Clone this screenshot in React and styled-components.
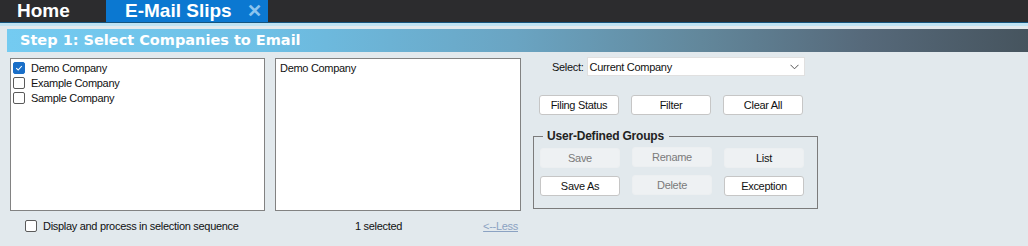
import React from 'react';
import styled, { createGlobalStyle } from 'styled-components';

const GlobalStyle = createGlobalStyle`
  html, body {
    margin: 0;
    padding: 0;
    background: #e2e9ed;
    font-family: "Liberation Sans", Arial, sans-serif;
    font-size: 11px;
    color: #111;
  }
`;

const TabBar = styled.div`
  height: 22px;
  background: #2c2c2e;
  display: flex;
  align-items: stretch;
`;

const Tab = styled.div`
  width: ${(p) => p.width}px;
  box-sizing: border-box;
  padding-left: ${(p) => p.pad}px;
  background: ${(p) => (p.active ? '#0b78d1' : 'transparent')};
  color: #fff;
  font-weight: bold;
  font-size: 19px;
  line-height: 22px;
  display: flex;
  align-items: center;
`;

const Close = styled.span`
  margin-left: 15px;
  color: #8cc4ef;
  font-size: 18px;
  font-weight: bold;
  line-height: 22px;
`;

const DarkLine = styled.div`
  height: 1px;
  background: #16557e;
`;

const LightBand = styled.div`
  height: 3px;
  background: #bfe3f3;
`;

const Page = styled.div`
  padding: 3px 0 0 7px;
`;

const StepHeader = styled.div`
  height: 23px;
  background: linear-gradient(to right, #74cbf1 0%, #6ec0e6 25%, #6aa4c2 50%, #62879b 68%, #56697a 84%, #46545e 100%);
  color: #fff;
  font-family: "DejaVu Sans", Verdana, sans-serif;
  font-weight: bold;
  font-size: 14.5px;
  line-height: 23px;
  padding-left: 13px;
`;

const Body = styled.div`
  display: flex;
  align-items: flex-start;
  margin-top: 6px;
  padding-left: 3px;
`;

const ListBox = styled.div`
  width: ${(p) => p.width}px;
  height: 153px;
  box-sizing: border-box;
  margin-left: ${(p) => p.offset || 0}px;
  background: #fff;
  border: 1px solid #828282;
  padding: 1px 2px;
`;

const Row = styled.div`
  height: 15px;
  display: flex;
  align-items: center;
  letter-spacing: -0.3px;
`;

const Box = styled.span`
  width: 12px;
  height: 12px;
  box-sizing: border-box;
  margin-right: 6px;
  border-radius: 2px;
  border: 1px solid ${(p) => (p.checked ? '#1a6fc8' : '#5a5a5a')};
  background: ${(p) => (p.checked ? '#1a6fc8' : '#fff')};
  display: flex;
  align-items: center;
  justify-content: center;
  flex-shrink: 0;
`;

const PlainRow = styled(Row)`
  padding-left: 2px;
  height: 16px;
`;

const Panel = styled.div`
  width: 285px;
  margin-left: 12px;
  margin-top: -1px;
`;

const SelectRow = styled.div`
  display: flex;
  align-items: center;
  padding-left: 19px;
  letter-spacing: -0.3px;
`;

const SelectBox = styled.div`
  width: 218px;
  height: 19px;
  box-sizing: border-box;
  margin-left: 3px;
  background: #fff;
  border: 1px solid #e0e0e0;
  display: flex;
  align-items: center;
  justify-content: space-between;
  padding: 0 5px 0 2px;
`;

const ButtonRow = styled.div`
  display: flex;
  gap: 12px;
  padding-left: ${(p) => p.pad || 0}px;
  margin-top: ${(p) => p.top || 0}px;
`;

const Button = styled.div`
  width: 80px;
  height: 20px;
  box-sizing: border-box;
  border-radius: 3px;
  border: 1px solid ${(p) => (p.disabled || p.soft ? '#eceff1' : '#c6c6c6')};
  background: ${(p) => (p.disabled || p.soft ? '#eef1f3' : '#fff')};
  color: ${(p) => (p.disabled ? '#7a7a7a' : '#111')};
  display: flex;
  align-items: center;
  justify-content: center;
  letter-spacing: -0.3px;
  margin-top: ${(p) => p.shift || 0}px;
`;

const Group = styled.fieldset`
  margin: 14px 0 0 0;
  width: 285px;
  height: 80px;
  box-sizing: border-box;
  border: 1px solid #7b7b7b;
  padding: 5px 0 0 6px;
`;

const Legend = styled.legend`
  font-weight: bold;
  font-size: 12px;
  letter-spacing: -0.2px;
  color: #222;
  margin-left: 3px;
  padding: 0 5px 0 4px;
`;

const Footer = styled.div`
  display: flex;
  align-items: center;
  margin-top: 8px;
  padding-left: 3px;
  height: 14px;
  letter-spacing: -0.3px;
`;

const FooterLeft = styled.div`
  width: 265px;
  display: flex;
  align-items: center;
  padding-left: 15px;
  box-sizing: border-box;
`;

const FooterMid = styled.div`
  width: 246px;
  display: flex;
  justify-content: space-between;
  padding: 0 13px 0 70px;
  box-sizing: border-box;
  margin-left: 10px;
`;

const LessLink = styled.span`
  color: #8ba2c2;
  text-decoration: underline;
`;

const Check = () => (
  <svg width="8" height="8" viewBox="0 0 8 8">
    <path d="M1.2 4.2 L3.2 6 L6.8 2" fill="none" stroke="#fff" strokeWidth="1.1" />
  </svg>
);

const Chevron = () => (
  <svg width="9" height="6" viewBox="0 0 9 6">
    <path d="M0.5 0.8 L4.5 4.8 L8.5 0.8" fill="none" stroke="#555" strokeWidth="1" />
  </svg>
);

const companies = [
  { name: 'Demo Company', checked: true },
  { name: 'Example Company', checked: false },
  { name: 'Sample Company', checked: false },
];

export default function App() {
  return (
    <>
      <GlobalStyle />
      <TabBar>
        <Tab width={106} pad={17}>Home</Tab>
        <Tab active width={162} pad={19}>
          E-Mail Slips
          <Close>✕</Close>
        </Tab>
      </TabBar>
      <DarkLine />
      <LightBand />
      <Page>
        <StepHeader>Step 1: Select Companies to Email</StepHeader>
        <Body>
          <ListBox width={255}>
            {companies.map((c) => (
              <Row key={c.name}>
                <Box checked={c.checked}>{c.checked && <Check />}</Box>
                {c.name}
              </Row>
            ))}
          </ListBox>
          <ListBox width={246} offset={10}>
            <PlainRow>Demo Company</PlainRow>
          </ListBox>
          <Panel>
            <SelectRow>
              Select:
              <SelectBox>
                <span>Current Company</span>
                <Chevron />
              </SelectBox>
            </SelectRow>
            <ButtonRow pad={6} top={19}>
              <Button>Filing Status</Button>
              <Button>Filter</Button>
              <Button>Clear All</Button>
            </ButtonRow>
            <Group>
              <Legend>User-Defined Groups</Legend>
              <ButtonRow>
                <Button disabled>Save</Button>
                <Button disabled shift={-1}>Rename</Button>
                <Button soft>List</Button>
              </ButtonRow>
              <ButtonRow top={8}>
                <Button>Save As</Button>
                <Button disabled shift={-1}>Delete</Button>
                <Button>Exception</Button>
              </ButtonRow>
            </Group>
          </Panel>
        </Body>
        <Footer>
          <FooterLeft>
            <Box />
            Display and process in selection sequence
          </FooterLeft>
          <FooterMid>
            <span>1 selected</span>
            <LessLink>&lt;--Less</LessLink>
          </FooterMid>
        </Footer>
      </Page>
    </>
  );
}
